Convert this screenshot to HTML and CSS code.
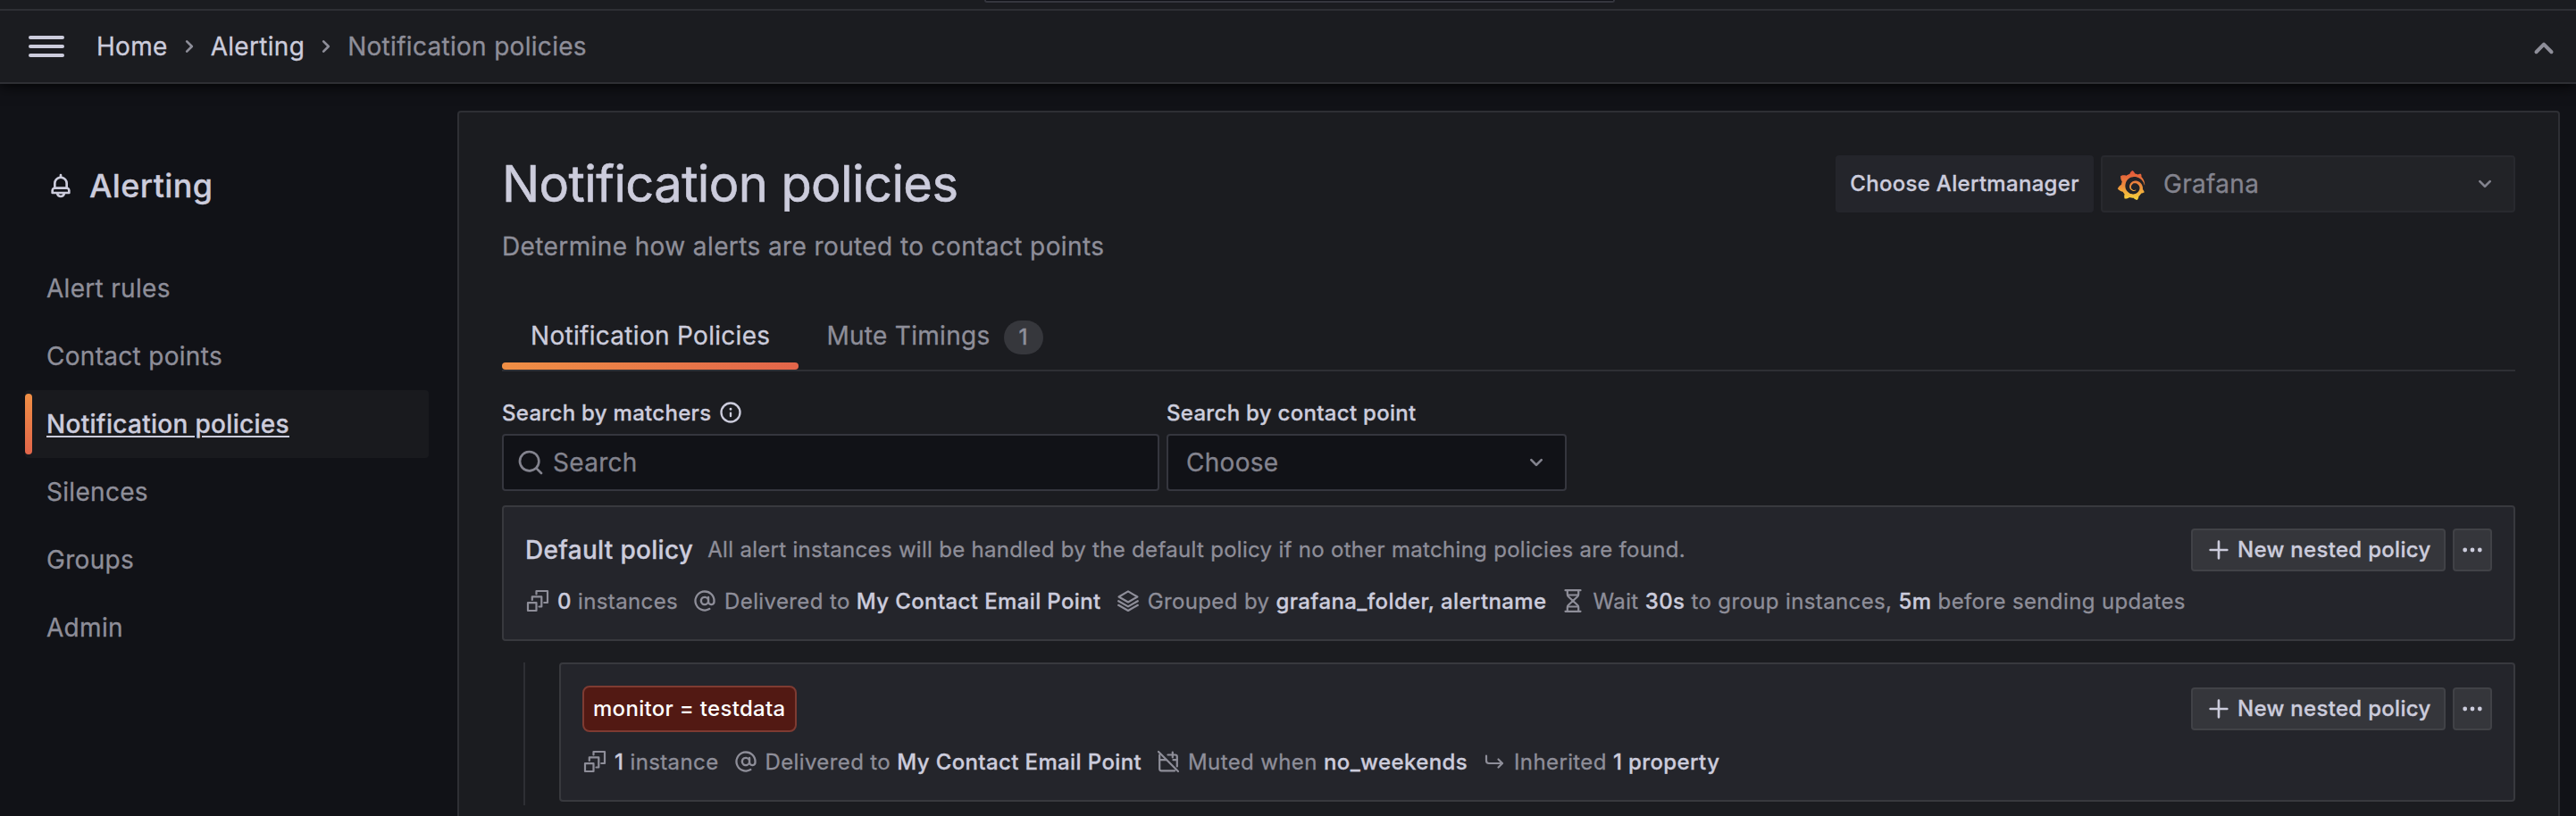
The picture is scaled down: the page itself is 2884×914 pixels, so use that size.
FILE: index.html
```
<!DOCTYPE html>
<html lang="en">
<head>
<meta charset="utf-8">
<title>Notification policies - Alerting</title>
<link rel="stylesheet" href="styles.css">
</head>
<body>
<svg class="defs" width="0" height="0" aria-hidden="true">
  <defs>
    <symbol id="angle-right" viewBox="0 0 24 24"><path d="M14.83,11.29,10.59,7.05a1,1,0,0,0-1.42,0,1,1,0,0,0,0,1.41L12.71,12,9.17,15.54a1,1,0,0,0,0,1.41,1,1,0,0,0,.71.29,1,1,0,0,0,.71-.29l4.24-4.24A1,1,0,0,0,14.83,11.29Z"/></symbol>
    <symbol id="angle-down" viewBox="0 0 24 24"><path d="M17,9.17a1,1,0,0,0-1.41,0L12,12.71,8.46,9.17a1,1,0,0,0-1.41,0,1,1,0,0,0,0,1.42l4.24,4.24a1,1,0,0,0,1.42,0L17,10.59A1,1,0,0,0,17,9.17Z"/></symbol>
    <symbol id="angle-up" viewBox="0 0 24 24"><path d="M17,13.41,12.71,9.17a1,1,0,0,0-1.42,0L7.05,13.41a1,1,0,0,0,0,1.42,1,1,0,0,0,1.41,0L12,11.29l3.54,3.54a1,1,0,0,0,.7.29,1,1,0,0,0,.71-.29A1,1,0,0,0,17,13.41Z"/></symbol>
    <symbol id="bell" viewBox="0 0 24 24"><path d="M18,13.18V10a6,6,0,0,0-5-5.91V3a1,1,0,0,0-2,0V4.09A6,6,0,0,0,6,10v3.18A3,3,0,0,0,4,16v2a1,1,0,0,0,1,1H8.14a4,4,0,0,0,7.72,0H19a1,1,0,0,0,1-1V16A3,3,0,0,0,18,13.18ZM8,10a4,4,0,0,1,8,0v3H8Zm4,10a2,2,0,0,1-1.72-1h3.44A2,2,0,0,1,12,20Zm6-3H6V16a1,1,0,0,1,1-1H17a1,1,0,0,1,1,1Z"/></symbol>
    <symbol id="info" viewBox="0 0 24 24"><path d="M12,2A10,10,0,1,0,22,12,10,10,0,0,0,12,2Zm0,18a8,8,0,1,1,8-8A8,8,0,0,1,12,20Zm0-8.5a1,1,0,0,0-1,1v3a1,1,0,0,0,2,0v-3A1,1,0,0,0,12,11.5Zm0-4a1.25,1.25,0,1,0,1.25,1.25A1.25,1.25,0,0,0,12,7.5Z"/></symbol>
    <symbol id="search" viewBox="0 0 24 24"><path d="M21.71,20.29,18,16.61A9,9,0,1,0,16.61,18l3.68,3.68a1,1,0,0,0,1.42,0A1,1,0,0,0,21.71,20.29ZM11,18a7,7,0,1,1,7-7A7,7,0,0,1,11,18Z"/></symbol>
    <symbol id="at" viewBox="0 0 24 24"><path d="M12,2A10,10,0,1,0,17,20.66a1,1,0,1,0-1-1.73A8,8,0,1,1,20,12v.75a1.75,1.75,0,0,1-3.5,0V8.5a1,1,0,0,0-1-1,1,1,0,0,0-1,.79A4.45,4.45,0,0,0,12,7.5,4.5,4.5,0,1,0,15.3,15,3.74,3.74,0,0,0,22,12.75V12A10,10,0,0,0,12,2Zm0,12.5A2.5,2.5,0,1,1,14.5,12,2.5,2.5,0,0,1,12,14.5Z"/></symbol>
    <symbol id="plus" viewBox="0 0 24 24"><path d="M19,11H13V5a1,1,0,0,0-2,0v6H5a1,1,0,0,0,0,2h6v6a1,1,0,0,0,2,0V13h6a1,1,0,0,0,0-2Z"/></symbol>
    <symbol id="dots" viewBox="0 0 32 32"><circle cx="7.7" cy="16" r="2.4"/><circle cx="16" cy="16" r="2.4"/><circle cx="24.3" cy="16" r="2.4"/></symbol>
    <symbol id="instances" viewBox="0 0 28 28"><g class="line"><path d="M3 16.200h9.500v8.800H3z"/><path d="M7.800 13V9.300h10.500v11.200H15.500"/><path d="M12.500 6.400V3H25v13h-3.800"/></g></symbol>
    <symbol id="layers" viewBox="0 0 28 28"><g class="line"><path d="M14 3.400L24.400 9.500 14 15.500 3.600 9.500z"/><path d="M3.200 14.200L14 20.400l10.800-6.200"/><path d="M3.200 18.800L14 25l10.800-6.200"/></g></symbol>
    <symbol id="hourglass" viewBox="0 0 28 28"><g class="line"><path d="M5.500 2.200h17M5.500 25.800h17"/><path d="M7.800 2.200v4.600c0 1.200.5 2 1.300 2.700L14 14l4.900-4.500c.8-.7 1.300-1.500 1.300-2.700V2.200"/><path d="M7.800 25.800v-4.600c0-1.200.5-2 1.300-2.700L14 14l4.900 4.500c.8.700 1.300 1.500 1.300 2.700v4.600"/><path d="M8.500 7.500h11M8.500 20.500h11"/></g></symbol>
    <symbol id="calendar-slash" viewBox="0 0 28 28"><g class="line"><path d="M3 3l22 22"/><path d="M4.200 6.500v15.800c0 1.200.7 2 2 2h15"/><path d="M4.200 12.200h7.500"/><path d="M13.500 6.500h8.300c1.200 0 2 .8 2 2v11"/><path d="M18.800 3.600v5.800M19.500 12.200h4.300"/></g></symbol>
    <symbol id="corner-arrow" viewBox="0 0 28 28"><g class="line"><path d="M5 7.500v5.500c0 1.800 1 3 3 3h14.500"/><path d="M18.500 11.500l4.500 4.500-4.500 4.500"/></g></symbol>
    <linearGradient id="flame" x1="0" y1="1" x2="0" y2="0"><stop offset="0" stop-color="#f6d43c"/><stop offset=".5" stop-color="#ec8a3c"/><stop offset="1" stop-color="#e2533a"/></linearGradient>
  </defs>
</svg>

<div class="app">
  <div class="topbar"><div class="topbar-search"></div></div>
  <header class="navbar">
    <button class="menu" aria-label="Menu"><span></span><span></span><span></span></button>
    <nav class="crumbs">
      <a>Home</a>
      <svg class="icon-md"><use href="#angle-right"/></svg>
      <a>Alerting</a>
      <svg class="icon-md"><use href="#angle-right"/></svg>
      <span>Notification policies</span>
    </nav>
    <svg class="collapse"><use href="#angle-up"/></svg>
  </header>

  <div class="body">
    <aside class="sidebar">
      <div class="section"><svg class="icon-md"><use href="#bell"/></svg><span>Alerting</span></div>
      <ul class="links">
        <li>Alert rules</li>
        <li>Contact points</li>
        <li class="active"><a>Notification policies</a></li>
        <li>Silences</li>
        <li>Groups</li>
        <li>Admin</li>
      </ul>
    </aside>

    <main class="panel">
      <div class="heading">
        <h1>Notification policies</h1>
        <div class="am">
          <div class="am-label">Choose Alertmanager</div>
          <div class="am-select">
            <svg class="logo" viewBox="0 0 351 365"><path fill="url(#flame)" d="M342,161.2c-0.6-6.1-1.6-13.1-3.6-20.9c-2-7.7-5-16.2-9.4-25c-4.4-8.8-10.1-17.9-17.5-26.8c-2.9-3.5-6.1-6.9-9.5-10.2c5.1-20.3-6.2-37.9-6.2-37.9c-19.5-1.2-31.9,6.1-36.5,9.4c-0.8-0.3-1.5-0.7-2.3-1c-3.3-1.3-6.7-2.6-10.3-3.7c-3.5-1.1-7.1-2.1-10.8-3c-3.7-0.9-7.4-1.6-11.2-2.2c-0.7-0.1-1.3-0.2-2-0.3c-8.5-27.2-32.9-38.6-32.9-38.6c-27.3,17.3-32.4,41.5-32.4,41.5s-0.1,0.5-0.3,1.4c-1.5,0.4-3,0.9-4.5,1.3c-2.1,0.6-4.2,1.4-6.2,2.2c-2.1,0.8-4.1,1.6-6.2,2.5c-4.1,1.8-8.2,3.8-12.2,6c-3.9,2.2-7.7,4.6-11.4,7.1c-0.5-0.2-1-0.4-1-0.4c-37.8-14.4-71.3,2.9-71.3,2.9c-3.1,40.2,15.1,65.5,18.7,70.1c-0.9,2.5-1.7,5-2.5,7.5c-2.8,9.1-4.9,18.4-6.2,28.1c-0.2,1.4-0.4,2.8-0.5,4.2C18.8,192.700,8.500,228,8.500,228c29.100,33.500,63.100,35.600,63.100,35.600c0,0,0.100-0.100,0.100-0.100c4.300,7.700,9.300,15,14.900,21.900c2.400,2.900,4.800,5.600,7.400,8.300c-10.600,30.400,1.500,55.600,1.500,55.600c32.400,1.200,53.700-14.200,58.200-17.700c3.200,1.100,6.500,2.100,9.800,2.900c10,2.600,20.200,4.100,30.400,4.500c2.500,0.100,5.100,0.200,7.600,0.100l1.200,0l0.800,0l1.600,0l1.600-0.100l0,0.100c15.300,21.800,42.100,24.900,42.100,24.900c19.100-20.100,20.200-40.100,20.200-44.400l0,0c0,0,0-0.100,0-0.300c0-0.400,0-0.600,0-0.600l0,0c0-0.300,0-0.600,0-0.900c4-2.800,7.800-5.800,11.400-9.100c7.600-6.900,14.300-14.800,19.900-23.300c0.500-0.800,1-1.600,1.500-2.400c21.600,1.200,36.900-13.400,36.900-13.400c-3.600-22.500-16.400-33.500-19.100-35.600l0,0c0,0-0.100-0.100-0.300-0.200c-0.200-0.100-0.200-0.200-0.200-0.200c-0.100-0.100-0.300-0.200-0.500-0.300c0.100-1.400,0.200-2.700,0.300-4.100c0.200-2.400,0.200-4.900,0.200-7.300l0-1.800l0-0.900l0-0.500l-0.100-2.100l-0.100-2c0-0.700-0.100-1.300-0.200-1.900c-0.100-0.600-0.100-1.300-0.200-1.900l-0.200-1.900l-0.300-1.900c-0.400-2.500-0.800-4.900-1.400-7.400c-2.300-9.700-6.100-18.900-11-27.200c-5-8.300-11.200-15.600-18.300-21.800c-7-6.200-14.900-11.200-23.100-14.900c-8.300-3.700-16.900-6.100-25.500-7.200c-4.300-0.600-8.600-0.800-12.900-0.700l-1.600,0l-1.600,0l-1.600,0.100c-0.600,0-1.200,0.100-1.700,0.100c-2.200,0.200-4.400,0.500-6.500,0.900c-8.600,1.600-16.700,4.700-23.800,9c-7.100,4.300-13.300,9.600-18.300,15.600c-5,6-8.900,12.700-11.600,19.600c-2.700,6.900-4.200,14.100-4.600,21c-0.100,1.700-0.100,3.500-0.100,5.200c0,0.400,0,0.900,0,1.300l0.100,1.400c0.100,0.800,0.100,1.700,0.200,2.500c0.300,3.500,1,6.900,1.900,10.100c1.900,6.500,4.900,12.400,8.600,17.400c3.700,5,8.200,9.100,12.900,12.400c4.700,3.200,9.800,5.500,14.800,7c5,1.500,10,2.100,14.700,2.100c0.600,0,1.200,0,1.700,0c0.300,0,0.600,0,0.900,0c0.300,0,0.600,0,0.900-0.100c0.500,0,1-0.100,1.500-0.100l0.900-0.200c0.300,0,0.600-0.100,0.900-0.100c0.600-0.100,1.100-0.200,1.700-0.300c0.600-0.100,1.100-0.200,1.600-0.400c1.100-0.200,2.100-0.600,3.100-0.900c2-0.700,4-1.500,5.700-2.400c1.800-0.900,3.400-2,5-3c0.400-0.300,0.900-0.600,1.300-1c1.600-1.300,1.900-3.700,0.600-5.300c-1.100-1.400-3.100-1.800-4.700-0.900c-0.400,0.200-0.800,0.400-1.200,0.600c-1.400,0.700-2.800,1.300-4.300,1.800c-1.500,0.500-3.100,0.900-4.700,1.200c-0.800,0.100-1.600,0.200-2.500,0.300c-0.400,0-0.800,0.100-1.300,0.100c-0.400,0-0.900,0-1.200,0c-0.400,0-0.800,0-1.200,0c-0.500,0-1,0-1.500-0.100l-0.600,0c-0.200,0-0.500,0-0.700-0.100c-0.500-0.100-0.900-0.100-1.400-0.200c-3.700-0.500-7.400-1.600-10.900-3.200c-3.600-1.600-7-3.800-10.100-6.600c-3.100-2.800-5.800-6.100-7.900-9.900c-2.100-3.800-3.600-8-4.300-12.400c-0.300-2.200-0.500-4.500-0.400-6.700c0-0.600,0.100-1.200,0.100-1.800l0-0.800c0-0.300,0.100-0.600,0.100-0.900c0.100-1.200,0.300-2.400,0.500-3.600c1.700-9.600,6.500-19,13.900-26.100c1.900-1.800,3.900-3.400,6-4.900c2.100-1.500,4.400-2.800,6.800-3.900c2.400-1.100,4.800-2,7.400-2.700c2.500-0.700,5.100-1.100,7.800-1.400c1.300-0.100,2.600-0.200,4-0.200l2.700,0l1.500,0.100c2.900,0.200,5.700,0.600,8.500,1.300c5.600,1.200,11.100,3.300,16.200,6.100c10.200,5.700,18.900,14.500,24.200,25.100c2.700,5.300,4.600,11,5.500,16.900c0.200,1.500,0.400,3,0.500,4.500l0.100,1.100l0.100,1.100c0,0.400,0,0.800,0,1.100l0,2.100l0,1.100c0,0.700-0.100,1.900-0.100,2.600c-0.100,1.600-0.300,3.300-0.500,4.900c-0.200,1.600-0.500,3.200-0.800,4.800c-0.300,1.600-0.700,3.200-1.100,4.700c-0.800,3.100-1.800,6.200-3,9.300c-2.400,6-5.600,11.800-9.400,17.100c-7.700,10.600-18.200,19.200-30.200,24.700c-6,2.700-12.300,4.700-18.800,5.700c-3.200,0.600-6.500,0.900-9.800,1l-2.200,0l-2.800,0c-1.800,0-3.500-0.100-5.300-0.300c-7-0.500-13.900-1.800-20.700-3.700c-6.700-1.900-13.200-4.600-19.400-7.800c-12.300-6.600-23.400-15.600-32-26.500c-4.300-5.400-8.100-11.300-11.200-17.400c-3.100-6.100-5.600-12.600-7.400-19.100c-1.800-6.600-2.900-13.300-3.400-20.100l-0.100-1.900l0-6.700c0.100-3.300,0.400-6.800,0.800-10.200c0.400-3.400,1-6.900,1.700-10.300c0.700-3.400,1.500-6.800,2.500-10.200c1.900-6.700,4.300-13.200,7.100-19.300c5.700-12.200,13.100-23.100,22-31.800c2.200-2.200,4.500-4.200,6.900-6.200c2.400-1.900,4.900-3.700,7.500-5.400c2.500-1.700,5.200-3.200,7.900-4.600c1.300-0.700,2.700-1.400,4.100-2c5.700-2.600,9.900-4,12.900-4.900c6.700-2,13-3.300,20.100-4.300c11-1.200,20.400-1.400,26.800-1.200c5.800,0.200,11.500,0.900,17,1.900c11.100,2.100,21.500,5.600,31,10.300c9.500,4.600,17.900,10.300,25.300,16.500c6.500,5.700,13.300,12.600,18.800,19.700c5.200,6.700,9.400,13.500,12.700,19.900c3.400,6.700,5.800,12.600,7.700,18.200c1.500,4.400,2.600,8.300,3.500,11.700c0.300,1.400,1.600,2.300,3,2.100c1.500-0.100,2.600-1.300,2.600-2.800C342.600,170.400,342.500,166.100,342,161.200z"/></svg>
            <span>Grafana</span>
            <svg class="icon-md"><use href="#angle-down"/></svg>
          </div>
        </div>
      </div>
      <p class="subtitle">Determine how alerts are routed to contact points</p>

      <div class="tabs">
        <div class="tab selected">Notification Policies</div>
        <div class="tab">Mute Timings<span class="count">1</span></div>
      </div>

      <div class="filters">
        <div class="field matchers">
          <label>Search by matchers<svg class="icon-sm"><use href="#info"/></svg></label>
          <div class="control search"><svg class="icon-md"><use href="#search"/></svg><span>Search</span></div>
        </div>
        <div class="field contact">
          <label>Search by contact point</label>
          <div class="control choose"><span>Choose</span><svg class="icon-md"><use href="#angle-down"/></svg></div>
        </div>
      </div>

      <section class="policy">
        <div class="policy-top">
          <h2>Default policy</h2>
          <span class="desc">All alert instances will be handled by the default policy if no other matching policies are found.</span>
          <div class="actions">
            <button class="btn"><svg class="icon-md"><use href="#plus"/></svg>New nested policy</button>
            <button class="btn more" aria-label="More"><svg class="icon-md"><use href="#dots"/></svg></button>
          </div>
        </div>
        <div class="meta">
          <span class="item"><svg class="icon-sm"><use href="#instances"/></svg><span><b>0</b> instances</span></span>
          <span class="item"><svg class="icon-sm"><use href="#at"/></svg><span>Delivered to <b>My Contact Email Point</b></span></span>
          <span class="item"><svg class="icon-sm"><use href="#layers"/></svg><span>Grouped by <b>grafana_folder, alertname</b></span></span>
          <span class="item"><svg class="icon-sm"><use href="#hourglass"/></svg><span>Wait <b>30s</b> to group instances, <b>5m</b> before sending updates</span></span>
        </div>
      </section>

      <div class="children">
        <section class="policy nested">
          <div class="policy-top">
            <span class="tag">monitor = testdata</span>
            <div class="actions">
              <button class="btn"><svg class="icon-md"><use href="#plus"/></svg>New nested policy</button>
              <button class="btn more" aria-label="More"><svg class="icon-md"><use href="#dots"/></svg></button>
            </div>
          </div>
          <div class="meta">
            <span class="item"><svg class="icon-sm"><use href="#instances"/></svg><span><b>1</b> instance</span></span>
            <span class="item"><svg class="icon-sm"><use href="#at"/></svg><span>Delivered to <b>My Contact Email Point</b></span></span>
            <span class="item"><svg class="icon-sm"><use href="#calendar-slash"/></svg><span>Muted when <b>no_weekends</b></span></span>
            <span class="item"><svg class="icon-sm"><use href="#corner-arrow"/></svg><span>Inherited <b>1 property</b></span></span>
          </div>
        </section>
      </div>
    </main>
  </div>
</div>
</body>
</html>
```
FILE: styles.css
```
* { box-sizing: border-box; }

body {
  margin: 0;
  background: #111217;
  color: #ccccdc;
  font: 400 28px/44px Inter, "Liberation Sans", sans-serif;
  letter-spacing: 0.3px;
  -webkit-text-stroke: 0.3px currentColor;
  overflow: hidden;
}

h1, h2, p, ul { margin: 0; padding: 0; font-weight: inherit; }
button { font: inherit; letter-spacing: inherit; color: inherit; margin: 0; padding: 0; background: none; border: 0; }
svg { display: block; flex: none; fill: currentColor; }
.defs { position: absolute; }
.line { fill: none; stroke: currentColor; stroke-width: 2.2; stroke-linecap: round; stroke-linejoin: round; }
.icon-md { width: 32px; height: 32px; }
.icon-sm { width: 28px; height: 28px; }

.app { height: 914px; display: flex; flex-direction: column; overflow: hidden; }

/* Header */
.topbar { flex: none; position: relative; z-index: 2; height: 12px; background: #1b1c20; border-bottom: 2px solid #2e2f34; display: flex; }
.topbar-search { width: 706px; height: 3px; margin-left: 1102px; background: #111217; border: 2px solid #35363e; border-top: 0; border-radius: 0 0 4px 4px; }
.navbar {
  flex: none;
  position: relative;
  z-index: 1;
  height: 82px;
  background: #1b1c20;
  border-bottom: 2px solid #2e2f34;
  box-shadow: 0 1px 16px #000;
  display: flex;
  align-items: center;
  padding: 0 12px 0 32px;
}
.menu { width: 40px; display: flex; flex-direction: column; gap: 6px; }
.menu span { height: 4px; border-radius: 2px; background: #ccccdc; }
.crumbs { display: flex; align-items: center; gap: 8px; margin-left: 36px; flex: 1; }
.crumbs span, .crumbs svg, .collapse { color: #8e8e99; }
.collapse { width: 48px; height: 48px; position: relative; top: 2px; }

.body { flex: 1; min-height: 0; display: flex; padding-right: 18px; }

/* Section navigation */
.sidebar { flex: none; width: 512px; padding: 92px 32px 0 28px; }
.section { display: flex; align-items: center; gap: 16px; padding-left: 24px; font-size: 36px; font-weight: 500; letter-spacing: 0.35px; }
.links { list-style: none; margin-top: 55px; color: #8e8e99; }
.links li { height: 76px; line-height: 76px; padding-left: 24px; }
.links .active { position: relative; background: #191a1e; border-radius: 4px; color: #ccccdc; font-weight: 500; }
.links .active::before { content: ""; position: absolute; left: 0; top: 4px; width: 8px; height: 68px; border-radius: 4px; background: linear-gradient(#f08f45, #e2654a); }
.links a { text-decoration: underline; text-decoration-thickness: 2px; text-underline-offset: 3px; }

/* Page */
.panel { flex: 1; margin-top: 30px; height: 900px; padding: 46px 48px 0; background: #1b1c20; border: 2px solid #2e2f34; border-radius: 4px; }
.heading { height: 68px; display: flex; align-items: center; justify-content: space-between; }
.heading h1 { font-size: 56px; line-height: 68px; letter-spacing: -0.6px; -webkit-text-stroke-width: 0.6px; }
.am { display: flex; gap: 8px; }
.am-label { width: 289px; height: 64px; line-height: 64px; text-align: center; font-size: 24px; font-weight: 500; background: #24252b; border-radius: 4px; }
.am-select { width: 464px; height: 64px; display: flex; align-items: center; padding: 0 16px; background: #222327; border: 2px solid #28292e; border-radius: 4px; color: #83838e; }
.am-select span { flex: 1; margin-left: 20px; }
.logo { width: 32px; height: 33px; margin-top: 2px; }
.subtitle { margin-top: 14px; color: #8e8e99; letter-spacing: 0.39px; }

.tabs { display: flex; height: 78px; margin-top: 40px; border-bottom: 2px solid #2e2f34; color: #8e8e99; }
.tab { height: 76px; line-height: 76px; padding: 0 31px; display: flex; align-items: center; }
.tab.selected { position: relative; padding: 0 32px; color: #ccccdc; }
.tab.selected::after { content: ""; position: absolute; left: 0; right: 0; bottom: 0; height: 8px; border-radius: 4px; background: linear-gradient(90deg, #f08f45, #e2654a); }
.count { width: 44px; height: 38px; margin: 4px 0 0 15px; line-height: 38px; text-align: center; font-size: 24px; font-weight: 500; background: #36373c; border-radius: 19px; }

.filters { display: flex; gap: 8px; margin-top: 29px; }
.matchers { width: 736px; }
.contact { width: 448px; }
.field label { display: flex; align-items: center; gap: 8px; height: 36px; font-size: 24px; line-height: 36px; font-weight: 500; }
.field label svg { position: relative; top: -1px; }
.control { display: flex; align-items: center; height: 64px; margin-top: 5px; background: #111217; border: 2px solid #35363e; border-radius: 4px; color: #83838e; }
.search { padding-left: 14px; gap: 9px; }
.choose { padding: 0 16px 0 20px; justify-content: space-between; }

/* Policies */
.policy { margin-top: 16px; padding: 24px; background: #24252b; border: 2px solid #38393e; border-radius: 4px; }
.policy-top { display: flex; align-items: center; height: 48px; }
.policy h2 { font-size: 28px; font-weight: 500; }
.desc { margin-left: 16px; font-size: 24px; color: #8e8e99; }
.actions { display: flex; gap: 8px; margin-left: auto; }
.btn { display: flex; align-items: center; gap: 5px; width: 285px; height: 48px; padding-left: 13px; font-size: 24px; font-weight: 500; line-height: 44px; background: #35363b; border: 2px solid #414247; border-radius: 4px; white-space: nowrap; }
.btn.more { width: 44px; padding: 0 4px; }
.meta { display: flex; gap: 16px; height: 38px; margin-top: 14px; font-size: 24px; line-height: 38px; letter-spacing: 0.38px; color: #8e8e99; white-space: nowrap; }
.item { display: flex; align-items: center; gap: 8px; }
.item > span { padding-top: 1px; }
.meta b { font-weight: 500; color: #ccccdc; }

.children { margin: 24px 0 0 24px; padding: 0 0 4px 38px; border-left: 2px solid #2e2f34; }
.nested { margin-top: 0; padding: 24px; }
.nested .policy-top { height: 52px; }
.tag { height: 52px; padding: 0 10px; line-height: 48px; font-size: 24px; font-weight: 500; color: #fff; -webkit-text-stroke-width: 0; background: #521913; border: 2px solid #7e3b32; border-radius: 8px; }
```
